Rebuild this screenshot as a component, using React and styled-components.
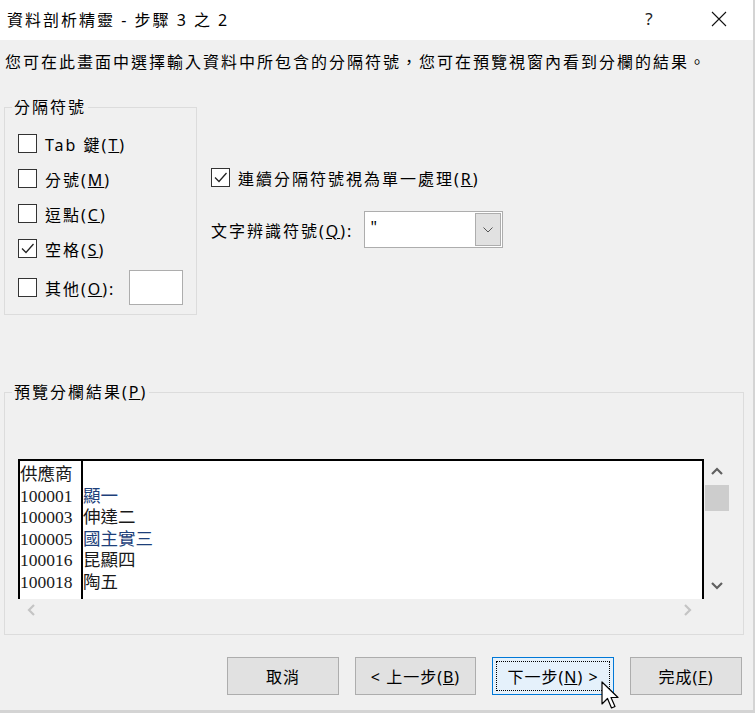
import React from 'react';
import styled, { createGlobalStyle } from 'styled-components';

const GlobalStyle = createGlobalStyle`
  html, body {
    margin: 0;
    padding: 0;
    background: #d4d4d4;
  }
  body {
    font-family: "Noto Sans", "Noto Sans CJK TC", sans-serif;
    color: #000;
  }
`;

const uiFont = `"Noto Sans", "Noto Sans CJK TC", sans-serif`;

const Dialog = styled.div`
  position: relative;
  width: 753px;
  height: 710px;
  background: #f0f0f0;
  display: flex;
  flex-direction: column;
  font-family: ${uiFont};
  font-size: 16px;
  letter-spacing: 2px;
`;

const TitleBar = styled.div`
  height: 40px;
  flex: none;
  background: #fff;
  display: flex;
  align-items: center;
  padding: 0 11px 3px 7px;
  box-sizing: border-box;
`;

const TitleText = styled.div`
  flex: 1;
  font-size: 16px;
  white-space: nowrap;
`;

const TitleButton = styled.div`
  width: 46px;
  height: 30px;
  display: flex;
  align-items: center;
  justify-content: center;
  font-size: 17px;
  letter-spacing: 0;
  color: #222;
  margin-left: ${(p) => p.$gap || 0}px;
`;

const Body = styled.div`
  flex: 1;
  display: flex;
  flex-direction: column;
  padding: 10px 10px 15px 4px;
`;

const Description = styled.div`
  line-height: 24px;
  padding-left: 1px;
  white-space: nowrap;
`;

const TopRow = styled.div`
  display: flex;
  align-items: flex-start;
  margin-top: 23px;
  height: 218px;
`;

const GroupBox = styled.fieldset`
  margin: 0;
  min-width: 0;
  box-sizing: border-box;
  width: ${(p) => p.$width}px;
  border: 1px solid #dcdcdc;
  padding: ${(p) => p.$pad};
`;

const GroupTitle = styled.legend`
  padding: 0 2px;
  margin-left: -6px;
  line-height: 20px;
`;

const CheckRow = styled.label`
  display: flex;
  align-items: center;
  height: 35px;
  gap: 8px;
  white-space: nowrap;
  margin-top: ${(p) => p.$offset || 0}px;
`;

const Box = styled.span`
  width: 19px;
  height: 19px;
  flex: none;
  box-sizing: border-box;
  border: 1px solid #333;
  background: #fff;
  display: flex;
  align-items: center;
  justify-content: center;
`;

const OtherInput = styled.div`
  margin-left: auto;
  width: 54px;
  height: 35px;
  box-sizing: border-box;
  border: 1px solid #adadad;
  background: #fff;
`;

const Options = styled.div`
  margin-left: 14px;
  padding-top: 63px;
  display: flex;
  flex-direction: column;
`;

const QualifierRow = styled.div`
  display: flex;
  align-items: center;
  margin-top: 16px;
  gap: 11px;
  white-space: nowrap;
`;

const Combo = styled.div`
  width: 139px;
  height: 37px;
  box-sizing: border-box;
  border: 1px solid #adadad;
  background: #fff;
  display: flex;
  align-items: center;
  padding: 1px;
`;

const ComboValue = styled.div`
  flex: 1;
  padding-left: 4px;
  letter-spacing: 0;
  align-self: flex-start;
  line-height: 28px;
`;

const ComboButton = styled.div`
  width: 26px;
  height: 33px;
  box-sizing: border-box;
  background: #e1e1e1;
  border: 1px solid #adadad;
  display: flex;
  align-items: center;
  justify-content: center;
`;

const PreviewGrid = styled.div`
  display: grid;
  grid-template-columns: 686px 25px;
  grid-template-rows: 140px 21px;
`;

const DataPane = styled.div`
  background: #fff;
  border: 2px solid #000;
  border-bottom: none;
  display: flex;
  overflow: hidden;
  font-family: "Liberation Serif", "Noto Sans CJK TC", serif;
  font-size: 17.5px;
  letter-spacing: 0;
  line-height: 21.6px;
  color: #1a1a1a;
`;

const DataColumn = styled.div`
  width: ${(p) => (p.$width ? `${p.$width}px` : 'auto')};
  flex: ${(p) => (p.$width ? 'none' : 1)};
  padding-top: 3px;
  border-right: ${(p) => (p.$divider ? '2px solid #000' : 'none')};
  white-space: nowrap;
`;

const Cell = styled.div`
  height: 21.6px;
  color: ${(p) => p.$tint || 'inherit'};
`;

const VScroll = styled.div`
  display: flex;
  flex-direction: column;
  align-items: stretch;
`;

const ScrollArrow = styled.div`
  height: 26px;
  display: flex;
  align-items: center;
  justify-content: center;
`;

const Thumb = styled.div`
  height: 26px;
  margin-left: 1px;
  background: #cdcdcd;
`;

const Spacer = styled.div`
  flex: 1;
`;

const HScroll = styled.div`
  display: flex;
  align-items: center;
  justify-content: space-between;
  padding: 0 10px 0 8px;
`;

const PreviewSection = styled.div`
  margin-top: 67px;
`;

const ButtonRow = styled.div`
  display: flex;
  justify-content: flex-end;
  gap: 16px;
  margin-top: 22px;
  padding-right: 1px;
`;

const Button = styled.button`
  width: ${(p) => p.$width}px;
  height: 38px;
  box-sizing: border-box;
  font-family: ${uiFont};
  font-size: 16px;
  letter-spacing: 1px;
  color: #000;
  background: ${(p) => (p.$focused ? '#e5f1fb' : '#e1e1e1')};
  border: 1px solid ${(p) => (p.$focused ? '#0078d7' : '#adadad')};
  outline: ${(p) => (p.$focused ? '1px dotted #000' : 'none')};
  outline-offset: -5px;
  padding: 0;
`;

const Cursor = styled.svg`
  position: absolute;
  left: 601px;
  top: 681px;
`;

const Check = () => (
  <svg width="15" height="15" viewBox="0 0 15 15">
    <polyline points="2,7.5 6,11.5 13.5,3" fill="none" stroke="#222" strokeWidth="1.3" />
  </svg>
);

const Chevron = ({ dir, color = '#606060' }) => {
  const pts = {
    up: '1,8 6,3 11,8',
    down: '1,3 6,8 11,3',
    left: '8,1 3,6 8,11',
    right: '3,1 8,6 3,11',
  }[dir];
  return (
    <svg width="12" height="12" viewBox="0 0 12 12">
      <polyline points={pts} fill="none" stroke={color} strokeWidth="2.2" />
    </svg>
  );
};

const CheckOption = ({ checked, children, offset }) => (
  <CheckRow $offset={offset}>
    <Box>{checked && <Check />}</Box>
    <span>{children}</span>
  </CheckRow>
);

// rows visible in the preview pane
const rows = [
  ['供應商', ''],
  ['100001', '顯一', '#1d3f7a'],
  ['100003', '伸達二'],
  ['100005', '國主實三', '#1d3f7a'],
  ['100016', '昆顯四'],
  ['100018', '陶五'],
];

export default function App() {
  return (
    <>
      <GlobalStyle />
      <Dialog>
        <TitleBar>
          <TitleText>資料剖析精靈 - 步驟 3 之 2</TitleText>
          <TitleButton>?</TitleButton>
          <TitleButton $gap={24}>
            <svg width="16" height="16" viewBox="0 0 16 16">
              <path d="M1 1 L15 15 M15 1 L1 15" stroke="#111" strokeWidth="1.1" />
            </svg>
          </TitleButton>
        </TitleBar>

        <Body>
          <Description>
            您可在此畫面中選擇輸入資料中所包含的分隔符號，您可在預覽視窗內看到分欄的結果。
          </Description>

          <TopRow>
            <GroupBox $width={193} $pad="9px 13px 9px 13px">
              <GroupTitle>分隔符號</GroupTitle>
              <CheckOption>Tab 鍵(<u>T</u>)</CheckOption>
              <CheckOption>分號(<u>M</u>)</CheckOption>
              <CheckOption>逗點(<u>C</u>)</CheckOption>
              <CheckOption checked>空格(<u>S</u>)</CheckOption>
              <CheckRow $offset={4}>
                <Box />
                <span>其他(<u>O</u>):</span>
                <OtherInput />
              </CheckRow>
            </GroupBox>

            <Options>
              <CheckOption checked>連續分隔符號視為單一處理(<u>R</u>)</CheckOption>
              <QualifierRow>
                <span>文字辨識符號(<u>Q</u>):</span>
                <Combo>
                  <ComboValue>"</ComboValue>
                  <ComboButton>
                    <svg width="10" height="6" viewBox="0 0 10 6">
                      <polyline points="0.5,0.5 5,5 9.5,0.5" fill="none" stroke="#555" strokeWidth="1" />
                    </svg>
                  </ComboButton>
                </Combo>
              </QualifierRow>
            </Options>
          </TopRow>

          <PreviewSection>
            <GroupBox $width={740} $pad="57px 13px 14px 13px">
              <GroupTitle>預覽分欄結果(<u>P</u>)</GroupTitle>
              <PreviewGrid>
                <DataPane>
                  <DataColumn $width={61} $divider>
                    {rows.map(([id]) => (
                      <Cell key={id}>{id}</Cell>
                    ))}
                  </DataColumn>
                  <DataColumn>
                    {rows.map(([id, name, tint]) => (
                      <Cell key={id} $tint={tint}>{name}</Cell>
                    ))}
                  </DataColumn>
                </DataPane>
                <VScroll>
                  <ScrollArrow><Chevron dir="up" /></ScrollArrow>
                  <Thumb />
                  <Spacer />
                  <ScrollArrow><Chevron dir="down" /></ScrollArrow>
                </VScroll>
                <HScroll>
                  <Chevron dir="left" color="#c4c4c4" />
                  <Chevron dir="right" color="#c4c4c4" />
                </HScroll>
              </PreviewGrid>
            </GroupBox>
          </PreviewSection>

          <ButtonRow>
            <Button $width={112}>取消</Button>
            <Button $width={121}>&lt; 上一步(<u>B</u>)</Button>
            <Button $width={122} $focused>下一步(<u>N</u>) &gt;</Button>
            <Button $width={112}>完成(<u>F</u>)</Button>
          </ButtonRow>
        </Body>

        <Cursor width="20" height="32" viewBox="0 0 20 32">
          <path
            d="M1 1 L1 23 L6.5 17.5 L10.5 27 L14 25.5 L10 16.5 L17 16.5 Z"
            fill="#fff"
            stroke="#000"
            strokeWidth="1.2"
            strokeLinejoin="round"
          />
        </Cursor>
      </Dialog>
    </>
  );
}
